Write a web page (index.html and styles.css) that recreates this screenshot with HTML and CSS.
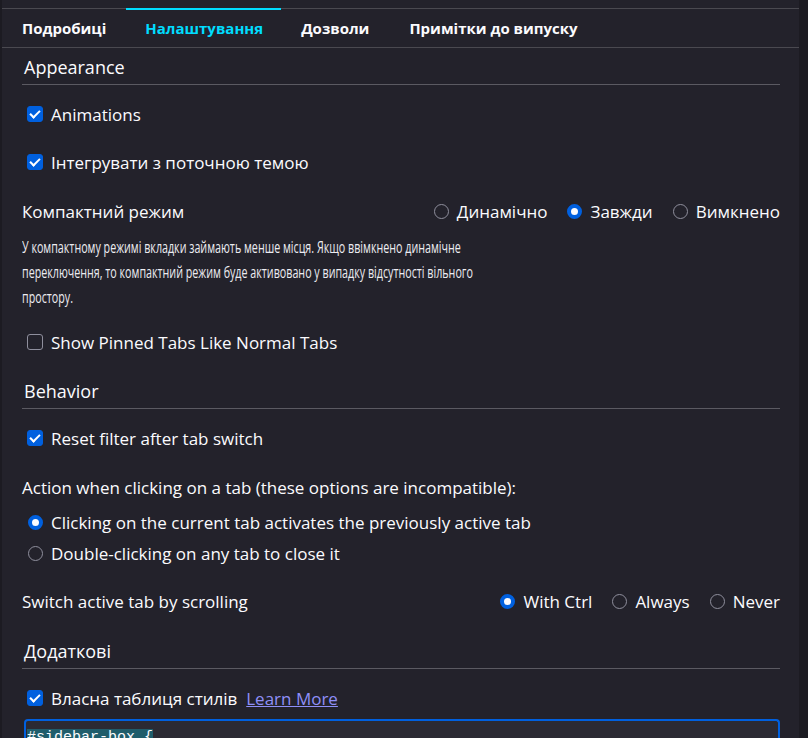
FILE: index.html
```html
<!DOCTYPE html>
<html lang="uk">
<head>
<meta charset="utf-8">
<link rel="stylesheet" href="styles.css">
</head>
<body>
<div class="frame">
  <div class="main">
    <nav class="tabs">
      <div class="tab">Подробиці</div>
      <div class="tab active">Налаштування</div>
      <div class="tab">Дозволи</div>
      <div class="tab">Примітки до випуску</div>
    </nav>
    <div class="content">
      <h2 class="heading">Appearance</h2>
      <label class="row cb first"><span class="box checked"></span>Animations</label>
      <label class="row cb r2"><span class="box checked"></span>Інтегрувати з поточною темою</label>
      <div class="row split r3">
        <span>Компактний режим</span>
        <div class="options">
          <span class="opt"><span class="radio"></span>Динамічно</span>
          <span class="opt"><span class="radio on"></span>Завжди</span>
          <span class="opt"><span class="radio"></span>Вимкнено</span>
        </div>
      </div>
      <div class="desc-wrap">
        <p class="desc">У компактному режимі вкладки займають менше місця. Якщо ввімкнено динамічне переключення, то компактний режим буде активовано у випадку відсутності вільного простору.</p>
      </div>
      <label class="row cb r5"><span class="box"></span>Show Pinned Tabs Like Normal Tabs</label>

      <h2 class="heading h2b">Behavior</h2>
      <label class="row cb first"><span class="box checked"></span>Reset filter after tab switch</label>
      <div class="row r7">Action when clicking on a tab (these options are incompatible):</div>
      <label class="row rad r8"><span class="radio on"></span>Clicking on the current tab activates the previously active tab</label>
      <label class="row rad r9"><span class="radio"></span>Double-clicking on any tab to close it</label>
      <div class="row split r10">
        <span>Switch active tab by scrolling</span>
        <div class="options">
          <span class="opt"><span class="radio on"></span>With Ctrl</span>
          <span class="opt"><span class="radio"></span>Always</span>
          <span class="opt"><span class="radio"></span>Never</span>
        </div>
      </div>

      <h2 class="heading h2c">Додаткові</h2>
      <label class="row cb first"><span class="box checked"></span>Власна таблиця стилів<a class="link" href="#">Learn More</a></label>
      <div class="editor"><span class="sel">#sidebar-box {</span></div>
    </div>
  </div>
  <div class="scrollbar"></div>
</div>
</body>
</html>
```
FILE: styles.css
```css
html, body {
  margin: 0;
  padding: 0;
  background: #23222b;
  height: 738px;
  overflow: hidden;
}
body {
  font-family: "Open Sans", "Noto Sans", sans-serif;
  font-size: 17px;
  color: #fbfbfe;
}
.frame {
  display: flex;
  height: 738px;
  border-left: 2px solid #1c1b22;
}
.main {
  flex: 1;
  padding-top: 8px;
  min-width: 0;
}
.scrollbar {
  width: 9px;
  background: #1c1b22;
}
.tabs {
  display: flex;
  height: 38px;
  border-top: 1px solid #4a4950;
  border-bottom: 1px solid #4a4950;
}
.tab {
  padding: 0 20px 1px;
  display: flex;
  align-items: center;
  font-weight: 700;
  font-size: 15px;
  border-top: 2px solid transparent;
  margin-top: -1px;
}
.tab.active {
  color: #00ddff;
  border-top-color: #00ddff;
  padding: 0 18px 1px 19px;
}
.content {
  padding: 0 19px 0 20px;
}
.heading {
  margin: 0;
  height: 37px;
  display: flex;
  align-items: center;
  font-size: 18px;
  font-weight: 400;
  border-bottom: 1px solid #5b5a62;
  padding-left: 2px;
  padding-top: 2px;
  box-sizing: border-box;
}
.h2b { margin-top: 15px; }
.h2c { margin-top: 16px; }
.row {
  height: 30px;
  display: flex;
  align-items: center;
  white-space: nowrap;
}
.first { margin-top: 14px; }
.r2 { margin-top: 18px; }
.r3 { margin-top: 19px; }
.r5 { margin-top: 18px; }
.r7 { margin-top: 19px; }
.r8 { margin-top: 5px; }
.r9 { margin-top: 1px; }
.r10 { margin-top: 18px; }
.cb { padding-left: 5px; }
.rad { padding-left: 6px; }
.box {
  width: 16px;
  height: 16px;
  box-sizing: border-box;
  border: 1px solid #8f8f9d;
  border-radius: 3px;
  margin-right: 8px;
  position: relative;
  flex: none;
}
.box.checked {
  background: #0060df;
  border-color: #0060df;
}
.box.checked::after {
  content: "";
  position: absolute;
  left: 4px;
  top: 1px;
  width: 4px;
  height: 8px;
  border: solid #fff;
  border-width: 0 2px 2px 0;
  transform: rotate(45deg);
}
.radio {
  width: 15px;
  height: 15px;
  box-sizing: border-box;
  border: 1px solid #8f8f9d;
  border-radius: 50%;
  margin-right: 8px;
  flex: none;
}
.radio.on {
  border: 4px solid #0060df;
  background: #fbfbfe;
}
.split {
  justify-content: space-between;
}
.options {
  display: flex;
  gap: 20px;
}
.opt {
  display: flex;
  align-items: center;
}
.desc-wrap {
  margin-top: 8px;
  height: 75px;
}
.desc {
  margin: 0;
  width: 760px;
  line-height: 25px;
  font-size: 17px;
  color: #ececf1;
  transform: scaleX(0.63);
  transform-origin: 0 0;
}
.link {
  color: #8f8ff8;
  margin-left: 9px;
  text-decoration: underline;
}
.editor {
  margin-top: 6px;
  margin-left: 2px;
  height: 40px;
  border: 2px solid #0060df;
  border-bottom: none;
  border-radius: 4px 4px 0 0;
  background: #2b2a33;
  font-family: "Liberation Mono", monospace;
  font-size: 15px;
  padding: 8px 0 0 1px;
  box-sizing: border-box;
}
.sel {
  background: #1f5d6b;
  color: #fbfbfe;
}
```
